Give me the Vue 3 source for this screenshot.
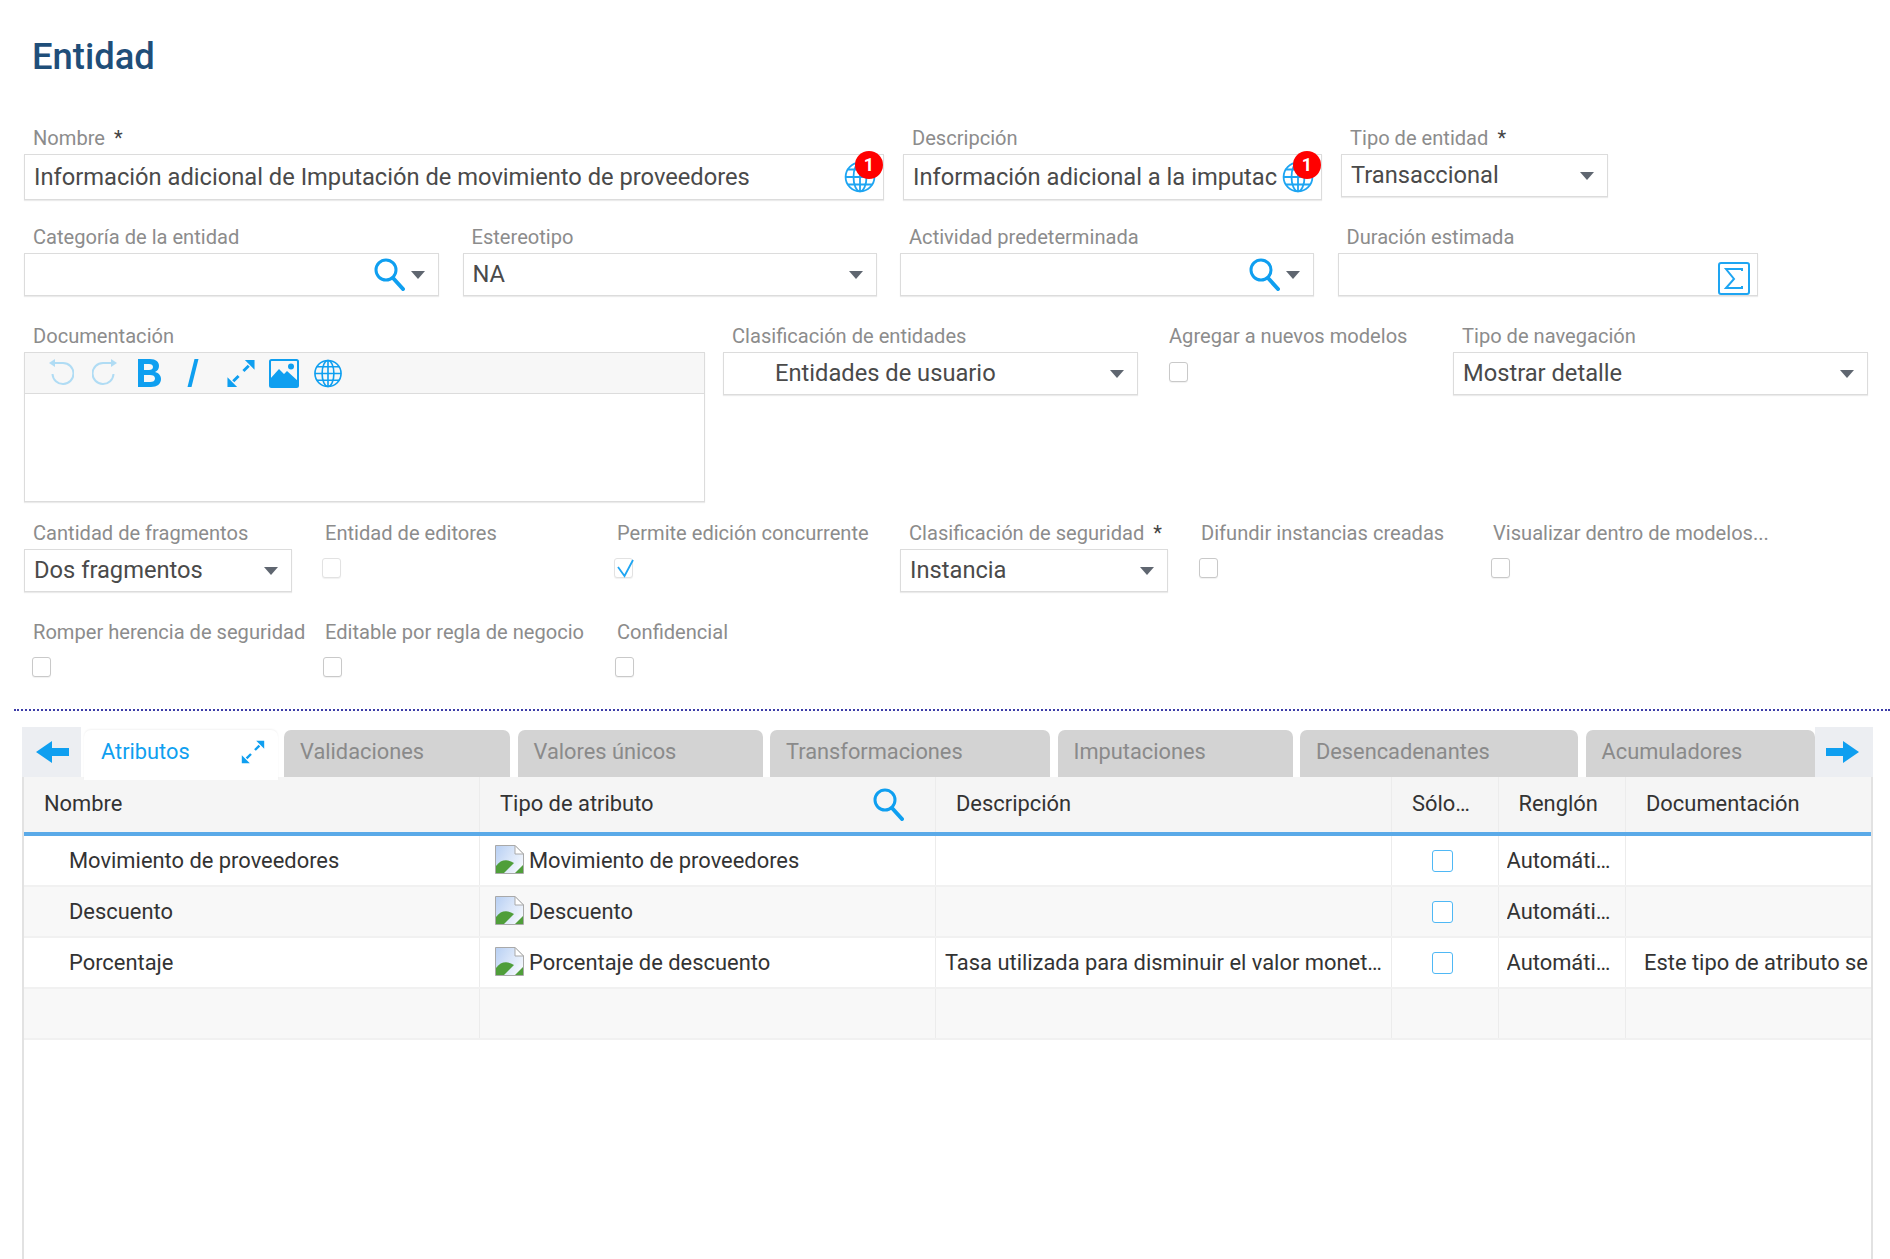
<template>
  <div class="page">
    <svg class="defs" width="0" height="0">
      <defs>
        <linearGradient id="sky" x1="0" y1="0" x2="1" y2="0.6">
          <stop offset="0" stop-color="#b7cff3" />
          <stop offset="1" stop-color="#f2f6fd" />
        </linearGradient>
      </defs>
      <symbol id="i-search" viewBox="0 0 31 33">
        <circle cx="12" cy="12" r="10" fill="none" stroke="currentColor" stroke-width="3" />
        <path d="M19 20 L29 31" fill="none" stroke="currentColor" stroke-width="4" stroke-linecap="round" />
      </symbol>
      <symbol id="i-globe" viewBox="0 0 32 32">
        <g fill="none" stroke="currentColor" stroke-width="1.8">
          <circle cx="16" cy="16" r="14.4" />
          <ellipse cx="16" cy="16" rx="6.5" ry="14.4" />
          <path d="M16 1.6 V30.4 M1.6 16 H30.4 M3.8 8.5 H28.2 M3.8 23.5 H28.2" />
        </g>
      </symbol>
      <symbol id="i-expand" viewBox="0 0 30 30">
        <path fill="currentColor" d="M19 1 H29 V11 Z M11 29 H1 V19 Z" />
        <path d="M23 7 L17.500 12.500 M7 23 L12.500 17.500" fill="none" stroke="currentColor" stroke-width="3" />
      </symbol>
      <symbol id="i-broken" viewBox="0 0 29 29">
        <path d="M0.500 0.500 H20 L28.500 9 V28.500 H0.500 Z" fill="url(#sky)" stroke="#a9a9a9" />
        <path d="M20 0.500 V9 H28.500 Z" fill="#fff" stroke="#a9a9a9" />
        <path d="M1 28 V21 C6 14 13 14 19 18 L9 28 Z" fill="#4f9e3a" />
        <path d="M20 28 L28 20 V28 Z" fill="#4f9e3a" />
      </symbol>
    </svg>

    <h1 class="title">Entidad</h1>

    <div class="row row-a">
      <div class="field">
        <label>Nombre <b>*</b></label>
        <div class="ctl tall">
          <span class="val">Información adicional de Imputación de movimiento de proveedores</span>
          <span class="globe-wrap">
            <svg class="globe"><use href="#i-globe" /></svg>
            <span class="badge">1</span>
          </span>
        </div>
      </div>
      <div class="field">
        <label>Descripción</label>
        <div class="ctl tall">
          <span class="val">Información adicional a la imputac</span>
          <span class="globe-wrap">
            <svg class="globe"><use href="#i-globe" /></svg>
            <span class="badge">1</span>
          </span>
        </div>
      </div>
      <div class="field">
        <label>Tipo de entidad <b>*</b></label>
        <div class="ctl"><span class="val">Transaccional</span><i class="caret"></i></div>
      </div>
    </div>

    <div class="row row-b">
      <div class="field">
        <label>Categoría de la entidad</label>
        <div class="ctl">
          <span class="val"></span>
          <svg class="search"><use href="#i-search" /></svg><i class="caret tight"></i>
        </div>
      </div>
      <div class="field">
        <label>Estereotipo</label>
        <div class="ctl"><span class="val">NA</span><i class="caret"></i></div>
      </div>
      <div class="field">
        <label>Actividad predeterminada</label>
        <div class="ctl">
          <span class="val"></span>
          <svg class="search"><use href="#i-search" /></svg><i class="caret tight"></i>
        </div>
      </div>
      <div class="field">
        <label>Duración estimada</label>
        <div class="ctl">
          <span class="val"></span>
          <svg class="sigma" viewBox="0 0 32 33">
            <rect x="1" y="1" width="30" height="31" rx="2" fill="none" stroke="#1ea5f2" stroke-width="2" />
            <path d="M24 9 V7 H8 L16 17 L8 26 H24 V24" fill="none" stroke="#1ea5f2" stroke-width="2" />
          </svg>
        </div>
      </div>
    </div>

    <div class="row row-c">
      <div class="field">
        <label>Documentación</label>
        <div class="editor">
          <div class="toolbar">
            <svg class="tool off" viewBox="0 0 26 28"><path d="M6 4 H15 A10.500 10.500 0 1 1 4.500 15" fill="none" stroke="#0f9ff0" stroke-width="2" /><path d="M7 0 V8 L1 4 Z" fill="#0f9ff0" /></svg>
            <svg class="tool off" viewBox="0 0 26 28"><path d="M20 4 H11 A10.500 10.500 0 1 0 21.500 15" fill="none" stroke="#0f9ff0" stroke-width="2" /><path d="M19 0 V8 L25 4 Z" fill="#0f9ff0" /></svg>
            <svg class="tool" viewBox="0 0 26 28"><path fill="#0f9ff0" fill-rule="evenodd" d="M2 0 H14 C20 0 23 3 23 7 C23 10 21.500 12 19 13 C23 14 25 17 25 20 C25 25 21 28 15 28 H2 Z M8 5 V11 H13 C15.500 11 17 10 17 8 C17 6 15.500 5 13 5 Z M8 16 V23 H14 C17 23 19 22 19 19.500 C19 17 17 16 14 16 Z" /></svg>
            <svg class="tool" viewBox="0 0 26 28"><path d="M14.500 0 H18.500 L11.500 28 H7.500 Z" fill="#0f9ff0" /></svg>
            <svg class="tool wide t-expand" style="color:#0f9ff0"><use href="#i-expand" /></svg>
            <svg class="tool wide t-image" viewBox="0 0 30 29">
              <rect x="1" y="1" width="28" height="27" rx="1.500" fill="none" stroke="#0f9ff0" stroke-width="2" />
              <path d="M1 20 L10 10 L15 15 L18 12 L29 22 V28 H1 Z" fill="#0f9ff0" />
              <circle cx="22" cy="7.500" r="3" fill="#0f9ff0" />
            </svg>
            <svg class="tool wide t-globe" style="color:#0f9ff0"><use href="#i-globe" /></svg>
          </div>
          <div class="editor-body"></div>
        </div>
      </div>
      <div class="field">
        <label>Clasificación de entidades</label>
        <div class="ctl"><span class="val indent">Entidades de usuario</span><i class="caret"></i></div>
      </div>
      <div class="field check-field">
        <label class="flush">Agregar a nuevos modelos</label>
        <div class="check"></div>
      </div>
      <div class="field">
        <label>Tipo de navegación</label>
        <div class="ctl"><span class="val">Mostrar detalle</span><i class="caret"></i></div>
      </div>
    </div>

    <div class="row row-d">
      <div class="field">
        <label>Cantidad de fragmentos</label>
        <div class="ctl"><span class="val">Dos fragmentos</span><i class="caret"></i></div>
      </div>
      <div class="field">
        <label>Entidad de editores</label>
        <div class="check pale"></div>
      </div>
      <div class="field">
        <label>Permite edición concurrente</label>
        <div class="check pale">
          <svg viewBox="0 0 20 20"><path d="M3 8 L9.500 17 L18 1" fill="none" stroke="#1ea5f2" stroke-width="1.800" /></svg>
        </div>
      </div>
      <div class="field">
        <label>Clasificación de seguridad <b>*</b></label>
        <div class="ctl"><span class="val">Instancia</span><i class="caret"></i></div>
      </div>
      <div class="field">
        <label>Difundir instancias creadas</label>
        <div class="check"></div>
      </div>
      <div class="field">
        <label>Visualizar dentro de modelos...</label>
        <div class="check"></div>
      </div>
    </div>

    <div class="row row-e">
      <div class="field">
        <label>Romper herencia de seguridad</label>
        <div class="check first"></div>
      </div>
      <div class="field">
        <label>Editable por regla de negocio</label>
        <div class="check"></div>
      </div>
      <div class="field">
        <label>Confidencial</label>
        <div class="check"></div>
      </div>
    </div>

    <div class="divider"></div>

    <div class="tabs">
      <div class="tab-arrow">
        <svg viewBox="0 0 33 22"><path d="M0 11 L16 0 V7 H33 V15 H16 V22 Z" fill="#0f9ff0" /></svg>
      </div>
      <div class="tab active">
        <span>Atributos</span>
        <svg class="tab-expand"><use href="#i-expand" /></svg>
      </div>
      <div v-for="t in tabs" :key="t.name" class="tab" :style="{ width: t.width + 'px' }">{{ t.name }}</div>
      <div class="tab-arrow right">
        <svg viewBox="0 0 33 22"><path d="M33 11 L17 0 V7 H0 V15 H17 V22 Z" fill="#0f9ff0" /></svg>
      </div>
    </div>

    <div class="grid">
      <div class="tr head">
        <div class="td">Nombre</div>
        <div class="td">Tipo de atributo<svg class="head-search"><use href="#i-search" /></svg></div>
        <div class="td">Descripción</div>
        <div class="td"><span class="clip">Sólo lectura</span></div>
        <div class="td">Renglón</div>
        <div class="td">Documentación</div>
      </div>
      <div v-for="(r, i) in rows" :key="i" class="tr body">
        <div class="td name">{{ r.name }}</div>
        <div class="td type">
          <svg v-if="r.type" class="broken"><use href="#i-broken" /></svg>{{ r.type }}
        </div>
        <div class="td desc"><span class="clip">{{ r.desc }}</span></div>
        <div class="td solo"><span v-if="r.name" class="blue-check"></span></div>
        <div class="td reng"><span class="clip">{{ r.name ? 'Automático' : '' }}</span></div>
        <div class="td docu">{{ r.doc }}</div>
      </div>
    </div>
  </div>
</template>

<script setup>
const tabs = [
  { name: 'Validaciones', width: 226 },
  { name: 'Valores únicos', width: 245 },
  { name: 'Transformaciones', width: 280 },
  { name: 'Imputaciones', width: 235 },
  { name: 'Desencadenantes', width: 278 },
  { name: 'Acumuladores', width: 229 }
]

const rows = [
  { name: 'Movimiento de proveedores', type: 'Movimiento de proveedores', desc: '', doc: '' },
  { name: 'Descuento', type: 'Descuento', desc: '', doc: '' },
  {
    name: 'Porcentaje',
    type: 'Porcentaje de descuento',
    desc: 'Tasa utilizada para disminuir el valor monetario del movimiento',
    doc: 'Este tipo de atributo se'
  },
  { name: '', type: '', desc: '', doc: '' }
]
</script>

<style>
html, body { margin: 0; background: #fff; }
</style>

<style scoped>
.page {
  width: 1890px;
  height: 1259px;
  overflow: hidden;
  display: flex;
  flex-direction: column;
  font-family: Roboto, "Liberation Sans", sans-serif;
  background: #fff;
  box-sizing: border-box;
}
.defs { position: absolute; }

.title {
  margin: 36px 0 0 32px;
  height: 90px;
  line-height: 42px;
  font-size: 36.4px;
  font-weight: 500;
  color: #1f4e79;
}

.row {
  display: grid;
  margin-left: 24px;
  align-items: start;
}
.row-a { grid-template-columns: 860px 419px 267px; column-gap: 19px; height: 99px; }
.row-b { grid-template-columns: 415px 414px 414px 420px; column-gap: 23.5px; height: 99px; }
.row-c { grid-template-columns: 681px 415px 279px 415px; column-gap: 18px; height: 197px; }
.row-d, .row-e { grid-template-columns: repeat(6, 268px); column-gap: 24px; height: 99px; }
.row-e { height: 89px; }

.field { min-width: 0; }
.field label {
  display: block;
  height: 28px;
  line-height: 25px;
  padding-left: 9px;
  font-size: 20.1px;
  color: #8c8c8c;
  white-space: nowrap;
}
.field label b { font-weight: 400; color: #444; margin-left: 4px; }
.check-field { padding-left: 13px; }
.field label.flush { padding-left: 0; }

.ctl {
  height: 43px;
  box-sizing: border-box;
  display: flex;
  align-items: center;
  position: relative;
  border: 1px solid #dcdcdc;
  box-shadow: 0 1px 1px rgba(0, 0, 0, 0.08);
  padding: 0 13px 0 9px;
  background: #fff;
}
.ctl.tall { height: 46px; }
.val {
  flex: 1;
  min-width: 0;
  overflow: hidden;
  white-space: nowrap;
  font-size: 23.7px;
  line-height: 30px;
  margin-bottom: 2px;
  color: #4a4a4a;
}
.ctl.tall .val { margin-bottom: 0; }
.val.indent { padding-left: 42px; }
.caret {
  width: 0;
  height: 0;
  border-left: 7px solid transparent;
  border-right: 7px solid transparent;
  border-top: 8px solid #5f6670;
}
.caret.tight { margin-left: 6px; margin-right: 0; }
.search { width: 31px; height: 33px; color: #0f9ff0; }
.sigma { width: 32px; height: 33px; margin: 7px -6px 0 0; }

.globe-wrap {
  position: relative;
  width: 32px;
  height: 32px;
  margin-right: -6px;
  margin-top: 0;
  flex: none;
}
.globe { width: 32px; height: 32px; color: #1ea5f2; display: block; }
.badge {
  position: absolute;
  left: 11px;
  top: -10px;
  width: 28px;
  height: 28px;
  border-radius: 50%;
  background: #f00;
  color: #fff;
  font-size: 18px;
  font-weight: 700;
  line-height: 28px;
  text-align: center;
}

.editor {
  height: 150px;
  box-sizing: border-box;
  border: 1px solid #dcdcdc;
  box-shadow: 0 1px 1px rgba(0, 0, 0, 0.08);
}
.toolbar {
  height: 41px;
  box-sizing: border-box;
  display: flex;
  align-items: center;
  gap: 18px;
  padding-left: 23px;
  background: #f7f7f7;
  border-bottom: 1px solid #dcdcdc;
}
.tool { width: 26px; height: 28px; flex: none; }
.tool.wide { width: 30px; height: 29px; }
.tool.off { opacity: 0.3; }
.t-expand { margin-left: 2px; }
.t-image { margin-left: -5px; }
.t-globe { margin-left: -4px; }

.check {
  width: 19px;
  height: 20px;
  box-sizing: border-box;
  margin: 9px 0 0 7px;
  border: 1px solid #c9c9c9;
  border-radius: 3px;
  box-shadow: 0 1px 1px rgba(0, 0, 0, 0.06);
  background: #fff;
}
.check-field .check { margin: 10px 0 0; }
.check.pale { border-color: #e2e2e2; margin-left: 6px; }
.check.first { margin-left: 8px; }
.check svg { display: block; width: 20px; height: 20px; }

.divider {
  margin: 0 0 0 14px;
  height: 0;
  border-top: 2px dotted #3d3da8;
}

.tabs {
  display: flex;
  margin: 16px 0 0 22px;
  width: 1850px;
  height: 50px;
  align-items: flex-end;
}
.tab-arrow {
  width: 59px;
  height: 50px;
  flex: none;
  background: #eceef2;
  display: flex;
  align-items: center;
  justify-content: center;
}
.tab-arrow svg { width: 33px; height: 22px; margin-left: 2px; }
.tab-arrow.right { width: 58px; }
.tab-arrow.right svg { margin-left: -2px; }
.tab {
  height: 47px;
  box-sizing: border-box;
  flex: none;
  padding-left: 16px;
  margin-right: 7.5px;
  background: #d3d3d3;
  border-radius: 7px 7px 0 0;
  color: #8a8a8a;
  font-size: 21.8px;
  line-height: 44px;
  white-space: nowrap;
}
.tab:nth-last-child(2) { margin-right: 0; }
.tab.active {
  width: 194px;
  height: 50px;
  margin: 0 6px -3px 3px;
  padding: 0 13px 6px 17px;
  background: #fff;
  color: #0f9ff0;
  position: relative;
  z-index: 1;
  display: flex;
  align-items: center;
  justify-content: space-between;
  box-shadow: 0 -1px 2px rgba(0, 0, 0, 0.05);
}
.tab-expand { width: 24px; height: 24px; color: #0f9ff0; }

.grid {
  flex: 1;
  margin-left: 22px;
  width: 1851px;
  box-sizing: border-box;
  border-left: 2px solid #e2e2e2;
  border-right: 2px solid #e2e2e2;
}
.tr {
  display: grid;
  grid-template-columns: 456px 456px 456px 106.5px 127.5px 245px;
}
.td {
  box-sizing: border-box;
  min-width: 0;
  display: flex;
  align-items: center;
  border-right: 1px solid #ececec;
  font-size: 21.9px;
  color: #333;
  white-space: nowrap;
  overflow: hidden;
}
.td:last-child { border-right: 0; }
.head {
  height: 59px;
  background: #f5f5f5;
  border-bottom: 4px solid #5aaae8;
  box-sizing: border-box;
}
.head .td { padding-left: 20px; padding-right: 27px; padding-bottom: 2px; position: relative; }
.head-search { position: absolute; right: 31px; top: 11px; width: 31px; height: 33px; color: #0f9ff0; }
.body {
  height: 51px;
  box-sizing: border-box;
  border-bottom: 2px solid #f1f1f1;
}
.body:nth-child(odd) { background: #f8f8f8; }
.name { padding-left: 45px; }
.type { padding-left: 15px; }
.broken { width: 29px; height: 29px; margin-right: 5px; flex: none; margin-top: -3px; }
.desc { padding: 0 9px; }
.reng { padding: 0 14px 0 8px; }
.docu { padding-left: 18px; }
.clip { overflow: hidden; text-overflow: ellipsis; }
.solo { justify-content: center; padding-right: 5px; }
.blue-check {
  width: 21px;
  height: 22px;
  box-sizing: border-box;
  border: 1.5px solid #4fb8f5;
  border-radius: 3px;
  background: #fff;
}
</style>
